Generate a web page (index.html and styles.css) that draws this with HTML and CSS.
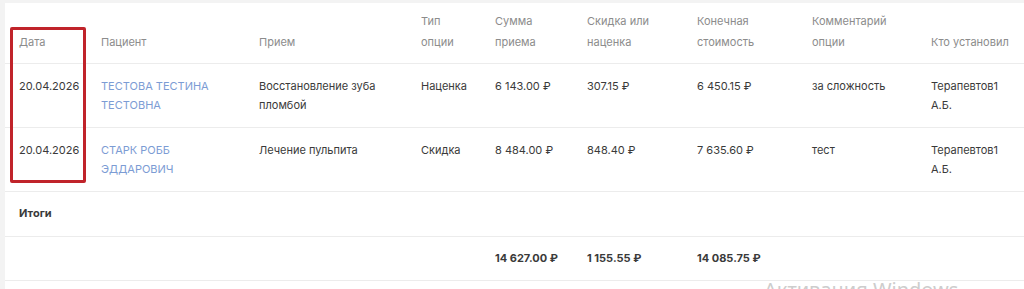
FILE: index.html
```html
<!DOCTYPE html>
<html lang="ru">
<head>
<meta charset="utf-8">
<link rel="stylesheet" href="styles.css">
</head>
<body>
<div class="page">
  <div class="card">
    <table class="report">
      <colgroup>
        <col class="c-date"><col class="c-pat"><col class="c-proc"><col class="c-type"><col class="c-sum"><col class="c-disc"><col class="c-final"><col class="c-comm"><col class="c-who">
      </colgroup>
      <thead>
        <tr>
          <th>Дата</th>
          <th>Пациент</th>
          <th>Прием</th>
          <th>Тип<br>опции</th>
          <th>Сумма<br>приема</th>
          <th>Скидка или<br>наценка</th>
          <th>Конечная<br>стоимость</th>
          <th>Комментарий<br>опции</th>
          <th>Кто установил</th>
        </tr>
      </thead>
      <tbody>
        <tr>
          <td>20.04.2026</td>
          <td class="pat"><a class="link">ТЕСТОВА ТЕСТИНА ТЕСТОВНА</a></td>
          <td>Восстановление зуба пломбой</td>
          <td>Наценка</td>
          <td>6 143.00 ₽</td>
          <td>307.15 ₽</td>
          <td>6 450.15 ₽</td>
          <td>за сложность</td>
          <td>Терапевтов1 А.Б.</td>
        </tr>
        <tr>
          <td>20.04.2026</td>
          <td class="pat"><a class="link">СТАРК РОББ ЭДДАРОВИЧ</a></td>
          <td>Лечение пульпита</td>
          <td>Скидка</td>
          <td>8 484.00 ₽</td>
          <td>848.40 ₽</td>
          <td>7 635.60 ₽</td>
          <td>тест</td>
          <td>Терапевтов1 А.Б.</td>
        </tr>
        <tr class="total-title">
          <td colspan="9">Итоги</td>
        </tr>
        <tr class="total-row">
          <td></td><td></td><td></td><td></td>
          <td>14 627.00 ₽</td>
          <td>1 155.55 ₽</td>
          <td>14 085.75 ₽</td>
          <td></td><td></td>
        </tr>
      </tbody>
    </table>
    <div class="highlight"></div>
  </div>
  <div class="watermark">Активация Windows</div>
</div>
</body>
</html>
```

FILE: styles.css
```css
html, body {
  margin: 0;
  padding: 0;
  background: #f3f3f3;
  overflow: hidden;
  width: 1024px;
  height: 289px;
}
body {
  font-family: Inter, "Noto Sans", Roboto, sans-serif;
  font-size: 11px;
  color: #333;
}
.page {
  position: relative;
  padding: 3px 0 0 5px;
  height: 286px;
  overflow: hidden;
}
.card {
  position: relative;
  background: #fff;
  width: 1019px;
  height: 286px;
  overflow: hidden;
}
.report {
  border-collapse: collapse;
  table-layout: fixed;
  width: 1040px;
}
.c-date { width: 96px; }
.c-pat { width: 158px; }
.c-proc { width: 162px; }
.c-type { width: 74px; }
.c-sum { width: 92px; }
.c-disc { width: 110px; }
.c-final { width: 115px; }
.c-comm { width: 119px; }
.c-who { width: 114px; }

.report th, .report td {
  text-align: left;
  padding: 0 12px 0 0;
  border-bottom: 1px solid #ececec;
}
.report th:first-child, .report td:first-child {
  padding-left: 14px;
}
.report th:last-child, .report td:last-child {
  padding-right: 34px;
}
.report td.pat {
  padding-right: 40px;
}
.report th {
  font-weight: 400;
  color: #8c8c8c;
  line-height: 21px;
  height: 50px;
  vertical-align: bottom;
  padding-bottom: 10px;
}
.report td {
  line-height: 19px;
  vertical-align: top;
  padding-top: 13px;
  padding-bottom: 12px;
  height: 38px;
  color: #3a3a3a;
}
.link {
  color: #7c9cd4;
  text-decoration: none;
}
.total-title td {
  font-weight: 700;
  height: 20px;
  padding-top: 12px;
}
.total-row td {
  font-weight: 700;
  height: 19px;
  padding-top: 12px;
}
.highlight {
  position: absolute;
  left: 5px;
  top: 24px;
  width: 70px;
  height: 150px;
  border: 3px solid #c0232a;
  border-radius: 2px;
}
.watermark {
  position: absolute;
  left: 764px;
  top: 276px;
  font-family: "Noto Sans", "Open Sans", sans-serif;
  font-size: 20px;
  color: #cdcdcd;
  white-space: nowrap;
}
```
